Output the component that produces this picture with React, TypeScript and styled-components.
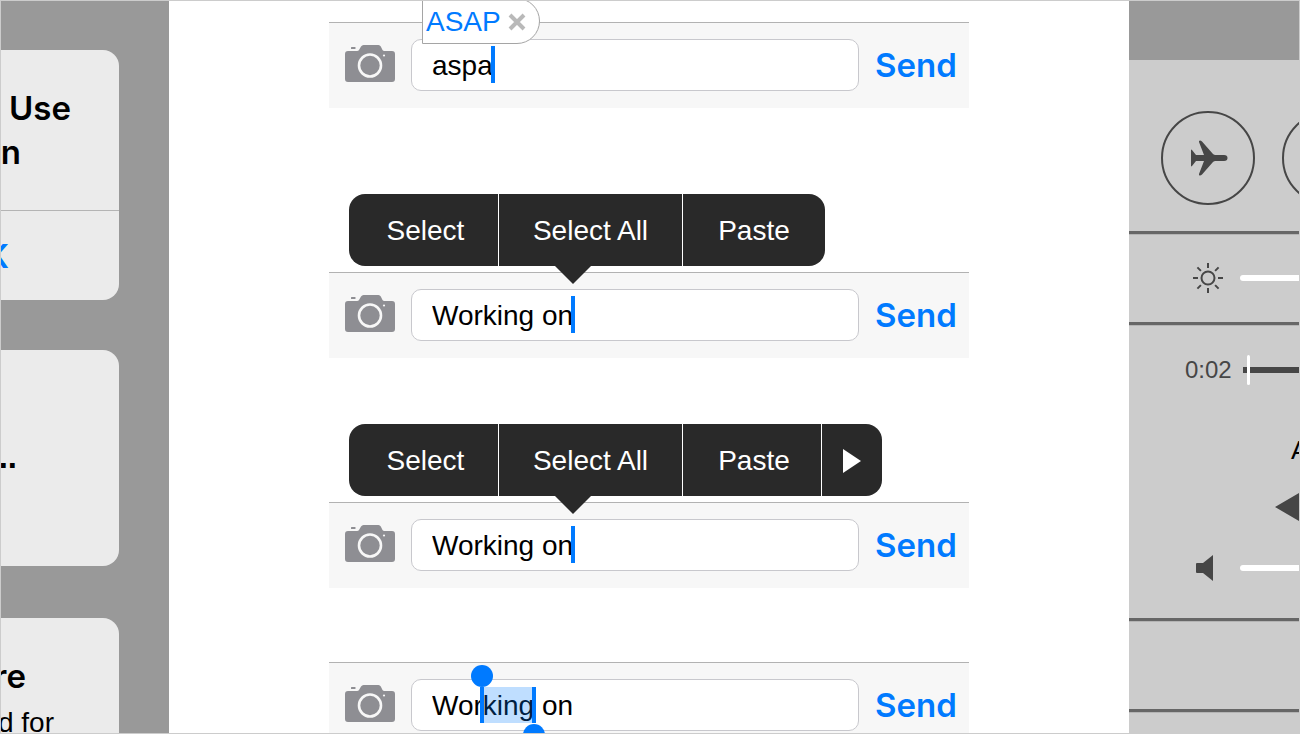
import React from "react";
import styled, { createGlobalStyle } from "styled-components";

const BLUE = "#007aff";
const INK = "#464646";

const GlobalStyle = createGlobalStyle`
  *, *::before, *::after { box-sizing: border-box; }
  body {
    margin: 0;
    background: #fff;
    font-family: "Liberation Sans", Arial, sans-serif;
    font-size: 28px;
    color: #000;
  }
  button, input { font: inherit; color: inherit; margin: 0; padding: 0; border: 0; background: none; }
`;

const Frame = styled.main`
  display: grid;
  grid-template-columns: 168px minmax(640px, 1fr) 170px;
  height: 100vh;
  border: 1px solid #ccc;
  overflow: hidden;
`;

/* Alerts */

const AlertColumn = styled.section`
  background: #999;
  padding: 49px 50px 0 0;
  overflow: hidden;
`;

const Card = styled.article<{ $gap: number }>`
  display: flex;
  flex-direction: column;
  background: #ebebeb;
  border-radius: 0 16px 16px 0;
  margin-bottom: ${(p) => p.$gap}px;
`;

const CardBody = styled.div<{ $top: number; $bottom: number }>`
  padding: ${(p) => p.$top}px 0 ${(p) => p.$bottom}px;
`;

const Line = styled.div<{ $end: number; $kind?: "text" | "dots" }>`
  display: flex;
  justify-content: flex-end;
  white-space: nowrap;
  padding-right: ${(p) => p.$end}px;
  line-height: ${(p) => (p.$kind === "text" ? 50 : 44)}px;
  font-size: ${(p) => (p.$kind === "text" ? 28 : 33)}px;
  font-weight: ${(p) => (p.$kind === "text" ? 400 : p.$kind === "dots" ? 700 : 600)};
  font-family: ${(p) =>
    p.$kind ? `"Liberation Sans", sans-serif` : `Inter, "Liberation Sans", sans-serif`};
`;

const CardAction = styled.button`
  display: flex;
  justify-content: flex-end;
  align-items: center;
  height: 90px;
  padding-right: 110px;
  border-top: 1px solid #b4b4b4;
  font-family: Inter, "Liberation Sans", sans-serif;
  font-size: 33px;
  font-weight: 600;
  color: ${BLUE};
`;

/* Messages */

const Thread = styled.section`
  background: #fff;
  padding: 21px 160px 0;
  overflow: hidden;
`;

const Entry = styled.div<{ $gap: number }>`
  position: relative;
  margin-bottom: ${(p) => p.$gap}px;
`;

const Bar = styled.form`
  display: flex;
  align-items: center;
  gap: 16px;
  height: 86px;
  padding: 0 14px 2px 16px;
  background: #f7f7f7;
  border-top: 1px solid #b2b2b2;
`;

const CameraButton = styled.button`
  display: flex;
  width: 50px;
  height: 40px;
`;

const Field = styled.label`
  position: relative;
  flex: 1;
  min-width: 0;
  display: flex;
`;

const TextBox = styled.input`
  width: 100%;
  height: 52px;
  padding: 2px 20px 0;
  border: 1px solid #c8c8cd;
  border-radius: 10px;
  background: #fff;
  outline: none;
`;

const SendButton = styled.button`
  width: 80px;
  font-family: Inter, "Liberation Sans", sans-serif;
  font-size: 33px;
  font-weight: 600;
  line-height: 44px;
  color: ${BLUE};
`;

const Caret = styled.span<{ $x: number }>`
  position: absolute;
  left: ${(p) => p.$x}px;
  top: 7px;
  width: 4px;
  height: 37px;
  background: ${BLUE};
`;

const Selection = styled.span`
  position: absolute;
  left: 69px;
  top: 8px;
  width: 56px;
  height: 36px;
  background: rgba(0, 122, 255, 0.25);
  border: solid ${BLUE};
  border-width: 0 4px;
`;

const Knob = styled.span<{ $end?: boolean }>`
  position: absolute;
  width: 22px;
  height: 22px;
  border-radius: 50%;
  background: ${BLUE};
  ${(p) => (p.$end ? "right: -13px; top: 37px;" : "left: -13px; bottom: 36px;")}
`;

const Suggestion = styled.div`
  position: absolute;
  left: 93px;
  top: -24px;
  display: flex;
  align-items: center;
  gap: 7px;
  width: 118px;
  height: 46px;
  padding: 2px 0 0 3px;
  border: 1px solid #a5a5a5;
  border-radius: 0 23px 23px 0;
  background: #fff;
  color: ${BLUE};
`;

const DismissButton = styled.button`
  display: flex;
`;

const EditMenu = styled.div`
  position: relative;
  display: flex;
  width: max-content;
  height: 72px;
  margin: 0 0 6px 20px;
  border-radius: 16px;
  background: #292929;
  color: #fff;
`;

const MenuItem = styled.button<{ $width: number; $inset?: number }>`
  display: flex;
  align-items: center;
  justify-content: center;
  width: ${(p) => p.$width}px;
  padding: 2px 0 0 ${(p) => p.$inset ?? 0}px;
  & + & { border-left: 1px solid #fff; }
`;

const MenuTail = styled.svg`
  position: absolute;
  left: 206px;
  top: 72px;
`;

/* Control centre */

const Controls = styled.section`
  display: flex;
  flex-direction: column;
  background: #ccc;
  color: ${INK};
  overflow: hidden;
`;

const Shade = styled.div`
  height: 59px;
  background: #999;
`;

const Group = styled.div<{ $height: number }>`
  flex: none;
  height: ${(p) => p.$height}px;
  border-bottom: 3px solid #666;
  box-shadow: 0 1px #b4b4b4;
`;

const Toggles = styled(Group)`
  display: flex;
  gap: 27px;
  padding: 51px 0 0 32px;
`;

const RoundButton = styled.button`
  flex: none;
  display: flex;
  align-items: center;
  justify-content: center;
  width: 94px;
  height: 94px;
  border: 2px solid ${INK};
  border-radius: 50%;
`;

const SliderRow = styled.label<{ $height: number }>`
  display: flex;
  align-items: center;
  height: ${(p) => p.$height}px;
`;

const SliderIcon = styled.span`
  flex: none;
  display: flex;
  justify-content: center;
  width: 111px;
  padding-left: 47px;
`;

const Time = styled.span`
  flex: none;
  width: 114px;
  padding-left: 56px;
  font-size: 24px;
`;

const Slider = styled.input<{ $scrub?: boolean }>`
  appearance: none;
  flex: none;
  width: 340px;
  height: 30px;
  outline: none;
  &::-webkit-slider-runnable-track {
    height: 6px;
    border-radius: ${(p) => (p.$scrub ? 0 : 3)}px;
    background: ${(p) => (p.$scrub ? INK : "#fff")};
  }
  &::-webkit-slider-thumb {
    appearance: none;
    width: ${(p) => (p.$scrub ? 3 : 30)}px;
    height: 30px;
    margin-top: -12px;
    border-radius: ${(p) => (p.$scrub ? 2 : 15)}px;
    background: #fff;
  }
`;

const TrackTitle = styled.div`
  display: flex;
  height: 70px;
  align-items: center;
  padding-left: 162px;
  font-size: 26px;
  color: #000;
`;

const Transport = styled.div`
  display: flex;
  align-items: center;
  height: 44px;
  padding-left: 146px;
`;

const PlainButton = styled.button`
  flex: none;
  display: flex;
`;

function MessageBar({ value, children }: { value: string; children: React.ReactNode }) {
  return (
    <Bar onSubmit={(e) => e.preventDefault()}>
      <CameraButton type="button" aria-label="Camera">
        <svg width="50" height="40" viewBox="0 2 50 40">
          <path
            fill="#8e8e93"
            d="M3 8H12Q13.500 8 14.300 6.500L16 3.500Q17 2 18.500 2H33.500Q35 2 35.800 3.500L37.500 7Q38 8 39.500 8H47Q50 8 50 11V36Q50 39 47 39H3Q0 39 0 36V11Q0 8 3 8Z"
          />
          <rect x="6" y="4" width="4.500" height="2" rx="0.500" fill="#8e8e93" />
          <circle cx="25" cy="22.500" r="11" fill="none" stroke="#f7f7f7" strokeWidth="2.600" />
          <circle cx="39" cy="12.500" r="1.100" fill="#f7f7f7" />
        </svg>
      </CameraButton>
      <Field>
        <TextBox aria-label="Message" defaultValue={value} spellCheck={false} />
        {children}
      </Field>
      <SendButton type="submit">Send</SendButton>
    </Bar>
  );
}

function Menu({ more }: { more?: boolean }) {
  return (
    <EditMenu>
      <MenuItem $width={149} $inset={4}>
        Select
      </MenuItem>
      <MenuItem $width={184}>Select All</MenuItem>
      <MenuItem $width={more ? 139 : 143} $inset={more ? 4 : 0}>
        Paste
      </MenuItem>
      {more && (
        <MenuItem $width={61} aria-label="More">
          <svg width="18" height="24" viewBox="0 0 18 24">
            <path d="M0 0L18 12L0 24Z" fill="#fff" />
          </svg>
        </MenuItem>
      )}
      <MenuTail width="36" height="18" viewBox="0 0 36 18">
        <path d="M0 0H36L18 18Z" fill="#292929" />
      </MenuTail>
    </EditMenu>
  );
}

export default function App() {
  return (
    <>
      <GlobalStyle />
      <Frame>
        <AlertColumn>
          <Card $gap={50}>
            <CardBody $top={36} $bottom={36}>
              <Line $end={48}>Use</Line>
              <Line $end={98}>n</Line>
            </CardBody>
            <CardAction>K</CardAction>
          </Card>
          <Card $gap={52}>
            <CardBody $top={85} $bottom={87}>
              <Line $end={102} $kind="dots">
                ..
              </Line>
            </CardBody>
          </Card>
          <Card $gap={0}>
            <CardBody $top={36} $bottom={60}>
              <Line $end={93}>re</Line>
              <Line $end={65} $kind="text">
                d for
              </Line>
            </CardBody>
          </Card>
        </AlertColumn>

        <Thread>
          <Entry $gap={86}>
            <MessageBar value="aspa">
              <Caret $x={80} />
            </MessageBar>
            <Suggestion>
              ASAP
              <DismissButton aria-label="Dismiss suggestion">
                <svg width="18" height="18" viewBox="0 0 18 18">
                  <path d="M2 2L16 16M16 2L2 16" stroke="#b9b9b9" strokeWidth="4" />
                </svg>
              </DismissButton>
            </Suggestion>
          </Entry>
          <Entry $gap={66}>
            <Menu />
            <MessageBar value="Working on">
              <Caret $x={160} />
            </MessageBar>
          </Entry>
          <Entry $gap={74}>
            <Menu more />
            <MessageBar value="Working on">
              <Caret $x={160} />
            </MessageBar>
          </Entry>
          <Entry $gap={0}>
            <MessageBar value="Working on">
              <Selection>
                <Knob />
                <Knob $end />
              </Selection>
            </MessageBar>
          </Entry>
        </Thread>

        <Controls>
          <Shade />
          <Toggles $height={174}>
            <RoundButton aria-label="Airplane mode">
              <svg width="42" height="36" viewBox="-4 0 42 36">
                <path
                  fill={INK}
                  d="M0 10.500Q0 9 1 10L5 15H13L8 2Q7.500 0.500 9 0.500Q10 0.500 11 1.500L22 14Q23 15 24.500 15H33Q36.500 15 36.500 18Q36.500 21 33 21H24.500Q23 21 22 22L11 34.500Q10 35.500 9 35.500Q7.500 35.500 8 34L13 21H5L1 26Q0 27 0 25.500Z"
                />
              </svg>
            </RoundButton>
            <RoundButton aria-label="Wi-Fi" />
          </Toggles>
          <Group $height={91}>
            <SliderRow $height={88}>
              <SliderIcon>
                <svg width="32" height="32" viewBox="0 0 32 32" fill="none" stroke={INK} strokeWidth="2">
                  <circle cx="16" cy="16" r="6.500" />
                  <path d="M16 1V6M16 26V31M1 16H6M26 16H31M5.400 5.400L8.900 8.900M23.100 23.100L26.600 26.600M26.600 5.400L23.100 8.900M8.900 23.100L5.400 26.600" />
                </svg>
              </SliderIcon>
              <Slider type="range" aria-label="Brightness" defaultValue={60} />
            </SliderRow>
          </Group>
          <Group $height={296}>
            <SliderRow $height={90}>
              <Time>0:02</Time>
              <Slider $scrub type="range" aria-label="Track position" step="any" defaultValue={1.3} />
            </SliderRow>
            <TrackTitle>A</TrackTitle>
            <Transport>
              <PlainButton aria-label="Previous track">
                <svg width="46" height="28" viewBox="0 0 46 28">
                  <path d="M0 14L24 0V28ZM22 14L46 0V28Z" fill={INK} />
                </svg>
              </PlainButton>
            </Transport>
            <SliderRow $height={78}>
              <SliderIcon>
                <svg width="24" height="26" viewBox="0 0 24 26">
                  <path d="M0 9Q0 8 1 8H7L17 0V26L7 18H1Q0 18 0 17Z" fill={INK} />
                </svg>
              </SliderIcon>
              <Slider type="range" aria-label="Volume" defaultValue={60} />
            </SliderRow>
          </Group>
          <Group $height={91} />
        </Controls>
      </Frame>
    </>
  );
}
